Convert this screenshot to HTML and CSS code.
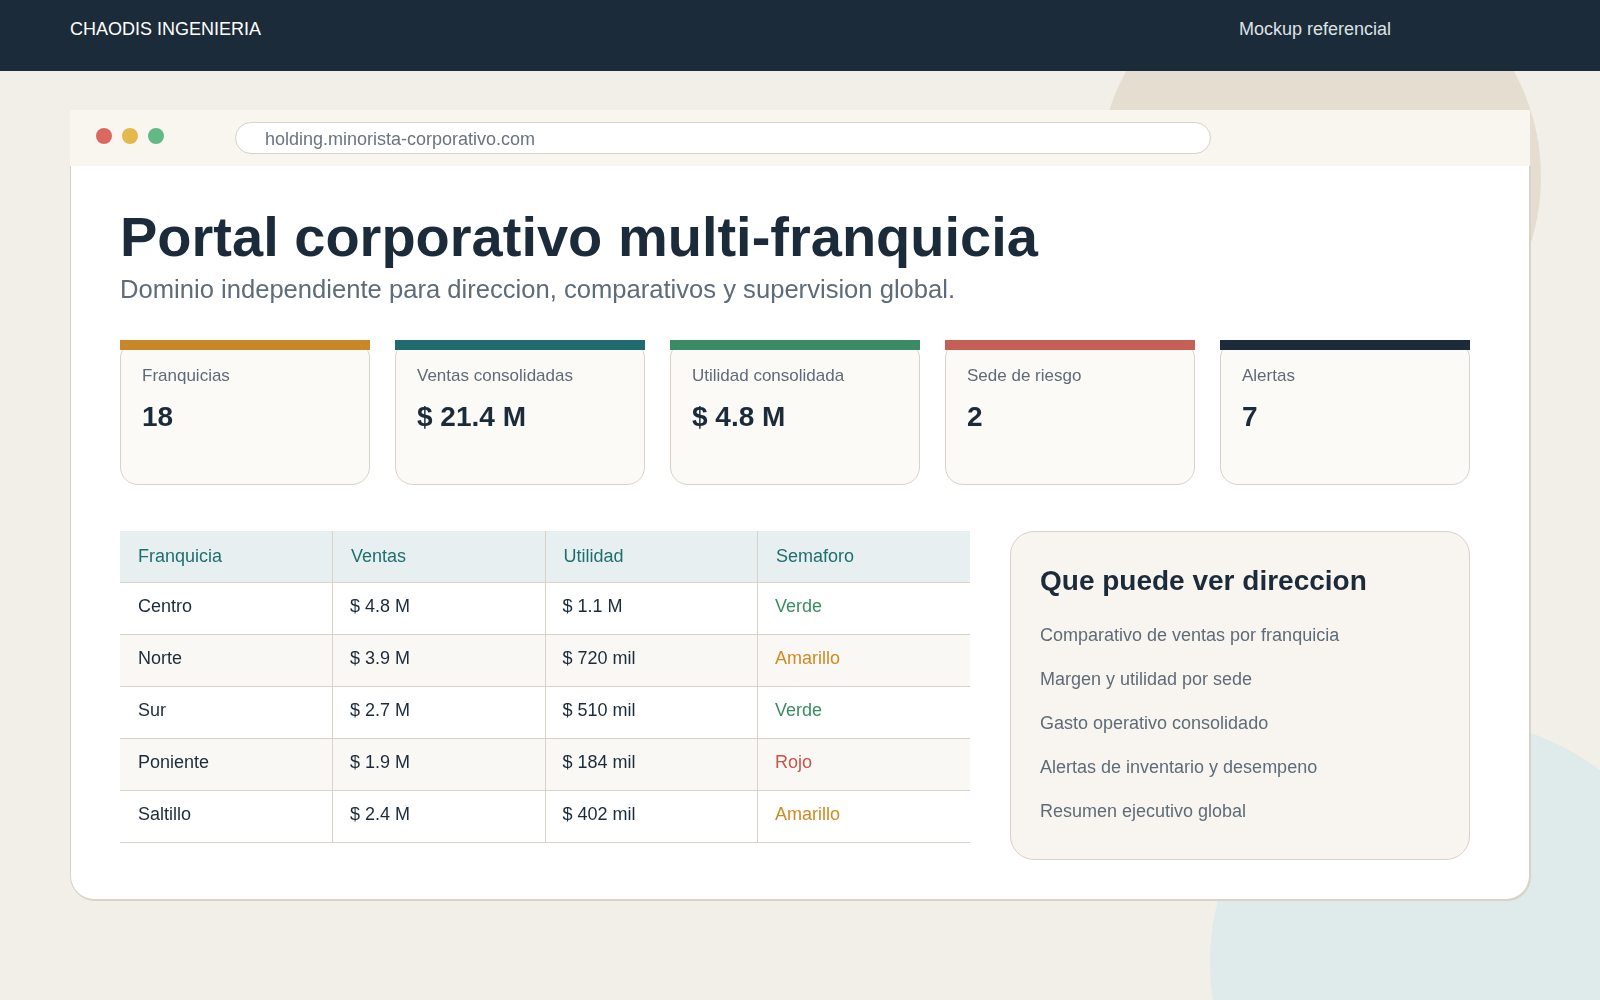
FILE: index.html
```html
<!DOCTYPE html>
<html lang="es">
<head>
  <meta charset="UTF-8" />
  <meta name="viewport" content="width=device-width, initial-scale=1.0"/>
  <title>Portal corporativo multi-franquicia</title>
  <link rel="stylesheet" href="styles.css">
</head>
<body>

  <!-- Background shapes -->
  <div class="backdrop">
    <div class="blob blob-top"></div>
    <div class="blob blob-bottom"></div>
  </div>

  <header class="topbar">
    <span class="brand">CHAODIS INGENIERIA</span>
    <span class="tag">Mockup referencial</span>
  </header>

  <main class="stage">
    <div class="browser">
      <div class="browser-bar">
        <div class="dots">
          <span class="dot dot-red"></span>
          <span class="dot dot-yellow"></span>
          <span class="dot dot-green"></span>
        </div>
        <div class="url">holding.minorista-corporativo.com</div>
      </div>

      <div class="browser-body">
        <div class="content">
          <h1 class="title">Portal corporativo multi-franquicia</h1>
          <p class="lead">Dominio independiente para direccion, comparativos y supervision global.</p>

          <div class="stats">
            <div class="stat stat-orange">
              <div class="stat-label">Franquicias</div>
              <div class="stat-value">18</div>
            </div>
            <div class="stat stat-teal">
              <div class="stat-label">Ventas consolidadas</div>
              <div class="stat-value">$ 21.4 M</div>
            </div>
            <div class="stat stat-green">
              <div class="stat-label">Utilidad consolidada</div>
              <div class="stat-value">$ 4.8 M</div>
            </div>
            <div class="stat stat-red">
              <div class="stat-label">Sede de riesgo</div>
              <div class="stat-value">2</div>
            </div>
            <div class="stat stat-navy">
              <div class="stat-label">Alertas</div>
              <div class="stat-value">7</div>
            </div>
          </div>

          <div class="lower">
            <table class="grid">
              <thead>
                <tr>
                  <th>Franquicia</th>
                  <th>Ventas</th>
                  <th>Utilidad</th>
                  <th>Semaforo</th>
                </tr>
              </thead>
              <tbody>
                <tr>
                  <td>Centro</td>
                  <td>$ 4.8 M</td>
                  <td>$ 1.1 M</td>
                  <td class="ok">Verde</td>
                </tr>
                <tr>
                  <td>Norte</td>
                  <td>$ 3.9 M</td>
                  <td>$ 720 mil</td>
                  <td class="warn">Amarillo</td>
                </tr>
                <tr>
                  <td>Sur</td>
                  <td>$ 2.7 M</td>
                  <td>$ 510 mil</td>
                  <td class="ok">Verde</td>
                </tr>
                <tr>
                  <td>Poniente</td>
                  <td>$ 1.9 M</td>
                  <td>$ 184 mil</td>
                  <td class="bad">Rojo</td>
                </tr>
                <tr>
                  <td>Saltillo</td>
                  <td>$ 2.4 M</td>
                  <td>$ 402 mil</td>
                  <td class="warn">Amarillo</td>
                </tr>
              </tbody>
            </table>

            <aside class="panel">
              <h2 class="panel-title">Que puede ver direccion</h2>
              <ul class="panel-list">
                <li>Comparativo de ventas por franquicia</li>
                <li>Margen y utilidad por sede</li>
                <li>Gasto operativo consolidado</li>
                <li>Alertas de inventario y desempeno</li>
                <li>Resumen ejecutivo global</li>
              </ul>
            </aside>
          </div>
        </div>
      </div>
    </div>
  </main>

</body>
</html>
```

FILE: styles.css
```css
* {
  margin: 0;
  padding: 0;
  box-sizing: border-box;
}

html, body {
  height: 100%;
  font-family: 'Liberation Sans', Arial, sans-serif;
  overflow: hidden;
}

body {
  background: #f2eee8;
  color: #1c2b3a;
  position: relative;
}

/* Decorative circles */
.backdrop {
  position: fixed;
  inset: 0;
  overflow: hidden;
  z-index: 0;
}

.blob {
  position: absolute;
  border-radius: 50%;
}

.blob-top {
  width: 442px;
  height: 442px;
  top: -44px;
  right: 59px;
  background: #e6ddd1;
}

.blob-bottom {
  width: 484px;
  height: 484px;
  top: 720px;
  left: 1210px;
  background: #dfeaea;
}

/* Top bar */
.topbar {
  position: relative;
  z-index: 2;
  display: flex;
  justify-content: space-between;
  background: #1c2b3a;
  color: #ffffff;
  font-size: 18px;
  line-height: 21px;
  padding: 19px 209px 31px 70px;
}

.tag {
  color: #dde2e6;
}

/* Browser mockup */
.stage {
  position: relative;
  z-index: 1;
  padding: 39px 0 0 70px;
}

.browser {
  width: 1460px;
}

.browser-bar {
  display: flex;
  align-items: center;
  height: 56px;
  padding: 0 26px;
  background: #f9f6f0;
}

.dots {
  display: flex;
  gap: 10px;
  width: 139px;
  margin-top: -5px;
}

.dot {
  width: 16px;
  height: 16px;
  border-radius: 50%;
}

.dot-red { background: #d9695f; }
.dot-yellow { background: #e3b94d; }
.dot-green { background: #62b886; }

.url {
  width: 976px;
  height: 32px;
  line-height: 30px;
  padding: 1px 29px 0;
  background: #ffffff;
  border: 1px solid #d8d2c8;
  border-radius: 16px;
  color: #6b7480;
  font-size: 18px;
}

.browser-body {
  background: #ffffff;
  border: 1px solid #d8d2c8;
  border-top: 0;
  border-radius: 0 0 24px 24px;
  box-shadow: 1px 1px 0 #d8d2c8;
  padding: 40px 0 39px 49px;
}

.content {
  max-width: 1350px;
}

.title {
  font-size: 56px;
  line-height: 1.1;
  font-weight: bold;
  color: #1c2b3a;
}

.lead {
  margin-top: 7px;
  font-size: 25.6px;
  color: #5f6b78;
}

/* KPI cards */
.stats {
  display: grid;
  grid-template-columns: repeat(5, 1fr);
  gap: 25px;
  margin-top: 36px;
}

.stat {
  position: relative;
  height: 145px;
  padding: 25px 21px 0;
  background: #fbfaf7;
  border: 1px solid #d8d2c8;
  border-radius: 18px;
}

.stat::before {
  content: '';
  position: absolute;
  top: -1px;
  left: -1px;
  right: -1px;
  height: 10px;
  background: var(--bar);
}

.stat-orange { --bar: #c8882a; }
.stat-teal { --bar: #1f6b6e; }
.stat-green { --bar: #3d8b66; }
.stat-red { --bar: #c46055; }
.stat-navy { --bar: #1c2b3a; }

.stat-label {
  font-size: 17px;
  line-height: 20px;
  color: #5f6b78;
}

.stat-value {
  margin-top: 15px;
  font-size: 28px;
  line-height: 32px;
  font-weight: bold;
  color: #1c2b3a;
}

/* Table + side panel */
.lower {
  display: grid;
  grid-template-columns: 1fr 460px;
  gap: 40px;
  align-items: start;
  margin-top: 46px;
}

.grid {
  width: 100%;
  table-layout: fixed;
  border-collapse: collapse;
  font-size: 18px;
  line-height: 21px;
}

.grid th,
.grid td {
  text-align: left;
  padding: 15px 18px;
  border-bottom: 1px solid #d8d2c8;
  border-right: 1px solid #d8d2c8;
}

.grid td {
  padding: 13px 17px 17px;
  color: #1c2b3a;
}

.grid th:last-child,
.grid td:last-child {
  border-right: 0;
}

.grid th {
  font-weight: normal;
  background: #e7eff0;
  color: #1f6f70;
}

.grid td:first-child {
  padding-left: 18px;
}

.grid tbody tr:nth-child(even) td {
  background: #faf8f4;
}

.grid td.ok { color: #3a8d62; }
.grid td.warn { color: #d08a22; }
.grid td.bad { color: #c9544a; }

.panel {
  background: #f8f5f0;
  border: 1px solid #d8d2c8;
  border-radius: 24px;
  padding: 33px 29px 36px;
}

.panel-title {
  font-size: 28px;
  line-height: 32px;
  font-weight: bold;
  color: #1c2b3a;
  margin-bottom: 26px;
}

.panel-list {
  list-style: none;
  display: flex;
  flex-direction: column;
  gap: 20px;
}

.panel-list li {
  font-size: 18px;
  line-height: 24px;
  color: #5f6b78;
}
```
